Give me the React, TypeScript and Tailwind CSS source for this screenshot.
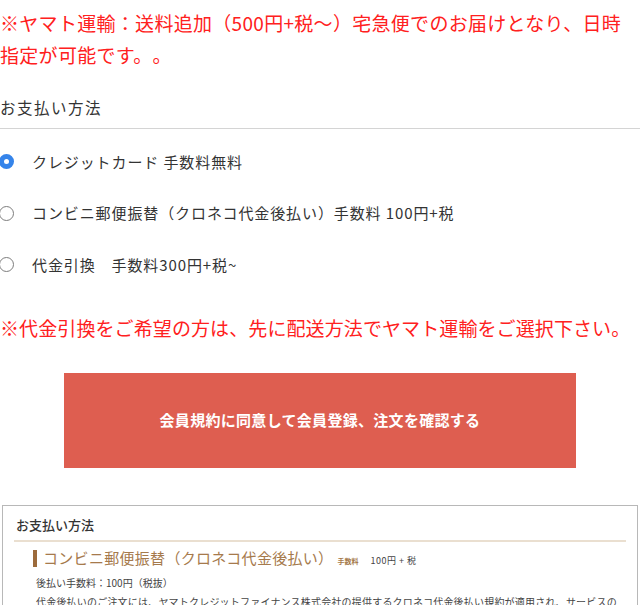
const FONT = { fontFamily: '"Noto Sans CJK JP", "Noto Sans", sans-serif' };

const Radio = ({ checked }: { checked?: boolean }) =>
  checked ? (
    <span className="ml-[-1px] flex h-[15px] w-[15px] shrink-0 items-center justify-center rounded-full bg-[#3584ea]">
      <span className="h-[5px] w-[5px] rounded-full bg-white" />
    </span>
  ) : (
    <span className="ml-[-1px] h-[15px] w-[15px] shrink-0 rounded-full border-[1.5px] border-[#7d7d7d] bg-white" />
  );

const options = [
  { label: 'クレジットカード 手数料無料', checked: true },
  { label: 'コンビニ郵便振替（クロネコ代金後払い）手数料 100円+税' },
  { label: '代金引換　手数料300円+税~' },
];

export default function App() {
  return (
    <div className="h-[605px] w-[640px] overflow-hidden bg-white [text-spacing-trim:space-all]" style={FONT}>
      <p className="mt-[-25px] text-[19px] leading-[32px] tracking-[0.3px] text-[#ff2020]">
        い。
        <br />
        ※ヤマト運輸：送料追加（500円+税～）宅急便でのお届けとなり、日時
        <br />
        指定が可能です。。
      </p>

      <div className="mt-[25px] border-b border-[#d4d4d4] pb-[10px]">
        <h3 className="text-[15.5px] leading-[22px] tracking-[1.5px] text-[#333]">お支払い方法</h3>
      </div>

      <ul className="mt-[7px] flex flex-col">
        {options.map((o) => (
          <li key={o.label} className="flex h-[51.5px] items-center gap-[18px]">
            <Radio checked={o.checked} />
            <span className="text-[15px] tracking-[0.9px] text-[#333]">{o.label}</span>
          </li>
        ))}
      </ul>

      <p className="mt-[21px] text-[19px] leading-[32px] tracking-[0.1px] text-[#ff2020]">
        ※代金引換をご希望の方は、先に配送方法でヤマト運輸をご選択下さい。
      </p>

      <div className="mt-[29px] flex justify-center">
        <button className="flex h-[95px] w-[512px] items-center justify-center bg-[#de5e50] text-[15px] font-bold tracking-[0.3px] text-white">
          会員規約に同意して会員登録、注文を確認する
        </button>
      </div>

      <section className="mx-[2px] mt-[37px] border border-[#b8b8b8] px-[11px] pt-[8px]">
        <h4 className="border-b-2 border-[#eadfd0] pb-[4px] pl-[2px] text-[13px] font-medium leading-[22px] text-[#333]">
          お支払い方法
        </h4>
        <div className="mt-[5px] flex items-baseline pl-[19px]">
          <span className="mr-[6px] h-[17px] w-[4px] translate-y-[3px] bg-[#9c6b3c]" />
          <span className="text-[15px] leading-[18px] tracking-[0.3px] text-[#a67a4c]">
            コンビニ郵便振替（クロネコ代金後払い）
          </span>
          <span className="ml-[4px] text-[7px] font-bold text-[#a67a4c]">手数料</span>
          <span className="ml-[12px] text-[9px] tracking-[0.5px] text-[#444]">100円 + 税</span>
        </div>
        <div className="mt-[6px] pl-[22px] text-[10px] leading-[19px] text-[#444]">
          <p>後払い手数料：100円（税抜）</p>
          <p className="whitespace-nowrap tracking-[0.2px]">
            代金後払いのご注文には、ヤマトクレジットファイナンス株式会社の提供するクロネコ代金後払い規約が適用され、サービスの
          </p>
        </div>
      </section>
    </div>
  );
}
